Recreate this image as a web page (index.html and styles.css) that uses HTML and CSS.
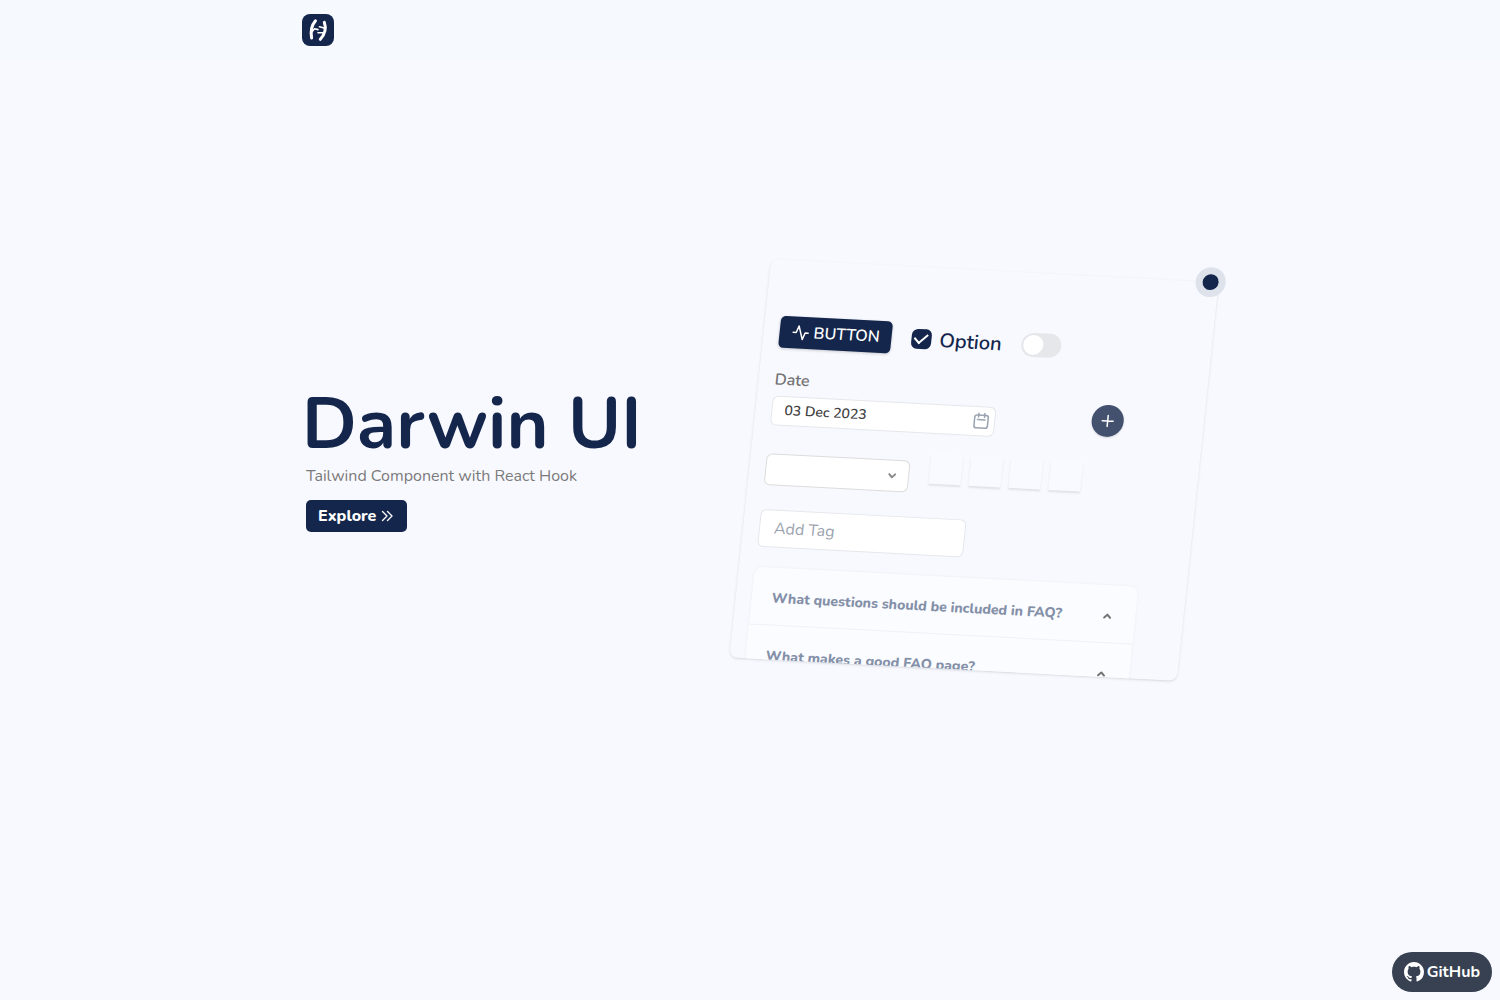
FILE: index.html
```html
<!DOCTYPE html>
<html lang="en">
<head>
<meta charset="utf-8">
<meta name="viewport" content="width=device-width, initial-scale=1">
<title>Darwin UI</title>
<link rel="stylesheet" href="styles.css">
</head>
<body>
<header class="navbar">
  <div class="container">
    <a class="logo" href="#" aria-label="Darwin UI home">
      <svg viewBox="0 0 32 32" width="32" height="32" aria-hidden="true">
        <path d="M13.500 6.800C9.800 11 8.400 17 9.600 24" stroke-width="3"/>
        <path d="M22.300 8.300C24.300 14 22.700 20.500 18.300 25.300" stroke-width="3"/>
        <path d="M10 17.800 12.500 14.800 16 15.600M22 14 17.500 12.800M21.500 18.800 16 18.800" stroke-width="1.600"/>
      </svg>
    </a>
  </div>
</header>

<main class="hero container">
  <section class="intro">
    <h1>Darwin UI</h1>
    <p>Tailwind Component with React Hook</p>
    <button type="button" class="btn explore">Explore
      <svg class="icon" viewBox="0 0 16 16" width="16" height="16" aria-hidden="true"><path d="m3.500 3.500 4.500 4.500-4.500 4.500M8.500 3.500 13 8l-4.500 4.500"/></svg>
    </button>
  </section>

  <section class="showcase" aria-label="Components">
    <span class="dot"></span>
    <div class="panel">
      <div class="row controls">
        <button type="button" class="btn sample">
          <svg class="icon" viewBox="0 0 24 24" width="18" height="18" aria-hidden="true"><path d="M22 12h-4l-3 9L9 3l-3 9H2"/></svg>BUTTON
        </button>
        <label class="option"><input type="checkbox" checked><span>Option</span></label>
        <input type="checkbox" class="switch" aria-label="Toggle">
      </div>

      <div class="row">
        <div class="field">
          <label for="date">Date</label>
          <div class="datebox">
            <input id="date" type="text" value="03 Dec 2023">
            <svg class="icon" viewBox="0 0 24 24" width="18" height="18" aria-hidden="true"><rect x="3" y="4" width="18" height="17" rx="3"/><path d="M8 1.500v5M16 1.500v5M7 10h10"/></svg>
          </div>
        </div>
        <button type="button" class="add" aria-label="Add">
          <svg class="icon" viewBox="0 0 16 16" width="16" height="16" aria-hidden="true"><path d="M8 2.500v11M2.500 8h11"/></svg>
        </button>
      </div>

      <div class="row pick">
        <div class="selectbox">
          <select aria-label="Choose"><option></option></select>
          <svg class="icon" viewBox="0 0 8 8" width="8" height="8" aria-hidden="true"><path d="m1 2.500 3 3 3-3"/></svg>
        </div>
        <div class="pin">
          <input type="text" maxlength="1" aria-label="Digit 1">
          <input type="text" maxlength="1" aria-label="Digit 2">
          <input type="text" maxlength="1" aria-label="Digit 3">
          <input type="text" maxlength="1" aria-label="Digit 4">
        </div>
      </div>

      <input class="tag" type="text" placeholder="Add Tag" aria-label="Add Tag">

      <div class="faq">
        <button type="button">What questions should be included in FAQ?
          <svg class="icon" viewBox="0 0 8 8" width="8" height="8" aria-hidden="true"><path d="m1 5.500 3-3 3 3"/></svg>
        </button>
        <button type="button">What makes a good FAQ page?
          <svg class="icon" viewBox="0 0 8 8" width="8" height="8" aria-hidden="true"><path d="m1 5.500 3-3 3 3"/></svg>
        </button>
      </div>
    </div>
  </section>
</main>

<a class="github" href="#">
  <svg viewBox="0 0 16 16" width="20" height="20" aria-hidden="true"><path d="M8 0C3.580 0 0 3.580 0 8c0 3.540 2.290 6.530 5.470 7.590.4.070.55-.17.55-.38 0-.19-.01-.82-.01-1.490-2.010.37-2.530-.49-2.690-.94-.09-.23-.48-.94-.82-1.130-.28-.15-.68-.52-.01-.53.63-.01 1.080.58 1.230.82.72 1.210 1.870.87 2.330.66.07-.52.28-.87.51-1.070-1.780-.2-3.640-.89-3.640-3.950 0-.87.31-1.590.82-2.150-.08-.2-.36-1.020.08-2.120 0 0 .67-.21 2.200.82.64-.18 1.320-.27 2-.27s1.360.09 2 .27c1.530-1.040 2.200-.82 2.200-.82.44 1.100.16 1.920.08 2.120.51.56.82 1.270.82 2.150 0 3.070-1.870 3.750-3.650 3.950.29.25.54.73.54 1.480 0 1.070-.01 1.930-.01 2.200 0 .21.15.46.55.38A8.010 8.010 0 0 0 16 8c0-4.420-3.580-8-8-8z"/></svg>GitHub
</a>
</body>
</html>
```
FILE: styles.css
```css
:root {
  --navy: #14264b;
  --page: #f8f9ff;
  --line: #e5e7eb;
}

* { box-sizing: border-box; }

body {
  margin: 0;
  min-height: 100vh;
  background: var(--page);
  color: var(--navy);
  font: 400 16px/24px "Nunito", "Lato", sans-serif;
}

button, input, select {
  margin: 0;
  border: 0;
  font: inherit;
  color: inherit;
}

button { cursor: pointer; }

.icon {
  flex: none;
  fill: none;
  stroke: currentColor;
  stroke-linecap: round;
  stroke-linejoin: round;
}

.container {
  width: 100%;
  max-width: 896px;
  margin: 0 auto;
}

.navbar {
  display: flex;
  align-items: center;
  height: 60px;
  background: #f6faff;
}

.logo {
  display: block;
  width: 32px;
  height: 32px;
  border-radius: 8px;
  background: var(--navy);
}

.logo svg {
  display: block;
  fill: none;
  stroke: #fff;
  stroke-linecap: round;
  stroke-linejoin: round;
}

.hero {
  display: grid;
  grid-template-columns: 1fr 1fr;
  align-items: center;
  min-height: calc(100vh - 180px);
}

.intro {
  display: flex;
  flex-direction: column;
  align-items: flex-start;
  padding-bottom: 20px;
}

h1 {
  margin: 0;
  font-size: 72px;
  font-weight: 700;
  line-height: 72px;
}

.intro p {
  margin: 4px 4px 12px;
  color: #7b7b7b;
}

.btn {
  display: flex;
  align-items: center;
  height: 32px;
  padding: 0 12px;
  border-radius: 5px;
  background: var(--navy);
  color: #fff;
}

.explore {
  gap: 3px;
  margin-left: 4px;
  font-weight: 800;
}

.explore .icon { stroke-width: 1.4; }

.showcase {
  position: relative;
  height: 400px;
  transform: rotate(3deg) skewX(-3deg);
}

.panel {
  height: 100%;
  padding: 56px 16px 0;
  overflow: hidden;
  border-radius: 8px;
  box-shadow: 0 1px 3px rgb(0 0 0 / 10%), 0 1px 2px -1px rgb(0 0 0 / 10%);
}

.dot {
  position: absolute;
  top: -15px;
  right: -7px;
  width: 30px;
  height: 30px;
  border: 7px solid #dde2eb;
  border-radius: 50%;
  background: var(--navy);
}

.row { display: flex; }

.controls {
  align-items: center;
  height: 32px;
  margin-bottom: 20px;
}

.sample {
  gap: 4px;
  font-weight: 600;
  box-shadow: 0 1px 3px rgb(0 0 0 / 20%);
}

.sample .icon { stroke-width: 2; }

.option {
  display: flex;
  align-items: center;
  gap: 8px;
  margin: 0 20px;
  font-size: 20px;
  font-weight: 600;
}

.option span { padding-top: 2px; }

.option input {
  appearance: none;
  display: grid;
  place-items: center;
  width: 20px;
  height: 20px;
  border-radius: 6px;
  background: var(--navy);
}

.option input::before {
  content: "";
  width: 11px;
  height: 6px;
  margin-bottom: 4px;
  border: solid #fff;
  border-width: 0 0 2px 2px;
  transform: rotate(-45deg);
}

.switch {
  appearance: none;
  width: 40px;
  height: 24px;
  padding: 2px;
  border-radius: 12px;
  background: var(--line);
}

.switch::before {
  content: "";
  display: block;
  width: 20px;
  height: 20px;
  border-radius: 50%;
  background: #fff;
}

.field {
  width: 224px;
  margin-right: 96px;
  color: #737373;
  font-weight: 600;
}

.field label {
  display: block;
  margin-bottom: 4px;
}

.datebox, .selectbox {
  display: flex;
  align-items: center;
  border: 1px solid var(--line);
  border-radius: 6px;
  background: #fff;
}

.datebox {
  height: 30px;
  padding: 0 4px 0 12px;
  color: #9aa3b2;
}

.datebox input {
  flex: 1;
  min-width: 0;
  padding: 0;
  background: none;
  color: #404040;
  font-size: 14px;
  line-height: 20px;
}

.datebox .icon { stroke-width: 2; }

.add {
  display: grid;
  place-items: center;
  align-self: center;
  width: 32px;
  height: 32px;
  margin-top: 14px;
  padding: 0;
  border-radius: 50%;
  background: #43516f;
  color: #fff;
  box-shadow: 0 1px 2px rgb(0 0 0 / 15%);
}

.add .icon { stroke-width: 1.5; }

.pick {
  gap: 20px;
  margin: 20px 0 24px;
}

.selectbox {
  width: 144px;
  height: 32px;
  margin-top: 8px;
  padding-right: 12px;
  border-color: #dcdcdc;
  color: #8a8a8a;
}

.selectbox select {
  appearance: none;
  flex: 1;
  min-width: 0;
  height: 100%;
  background: none;
}

.selectbox .icon, .faq .icon { stroke-width: 2; }

.pin {
  display: flex;
  gap: 8px;
}

.pin input {
  width: 32px;
  height: 30px;
  background: #f9faff;
  box-shadow: 0 2px 2px rgb(0 0 0 / 9%);
  text-align: center;
}

.tag {
  display: block;
  width: 206px;
  height: 38px;
  padding: 0 14px;
  border: 1px solid var(--line);
  border-radius: 6px;
  background: #fff;
}

.tag::placeholder { color: #9ca3af; }

.faq {
  width: 384px;
  margin-top: 20px;
  border-radius: 8px;
  background: #fbfcff;
  box-shadow: 0 0 3px rgb(0 0 0 / 6%);
}

.faq button {
  display: flex;
  align-items: center;
  justify-content: space-between;
  width: 100%;
  height: 58px;
  padding: 4px 24px 0 20px;
  border-bottom: 1px solid #f0f1f5;
  background: none;
  color: #8490a8;
  font-size: 14px;
  font-weight: 800;
}

.faq .icon { color: #737373; }

.github {
  position: fixed;
  right: 8px;
  bottom: 8px;
  display: flex;
  align-items: center;
  gap: 3px;
  height: 40px;
  padding: 0 12px;
  border-radius: 20px;
  background: #374151;
  color: #fff;
  font-weight: 700;
  text-decoration: none;
}

.github svg { fill: currentColor; }
```
